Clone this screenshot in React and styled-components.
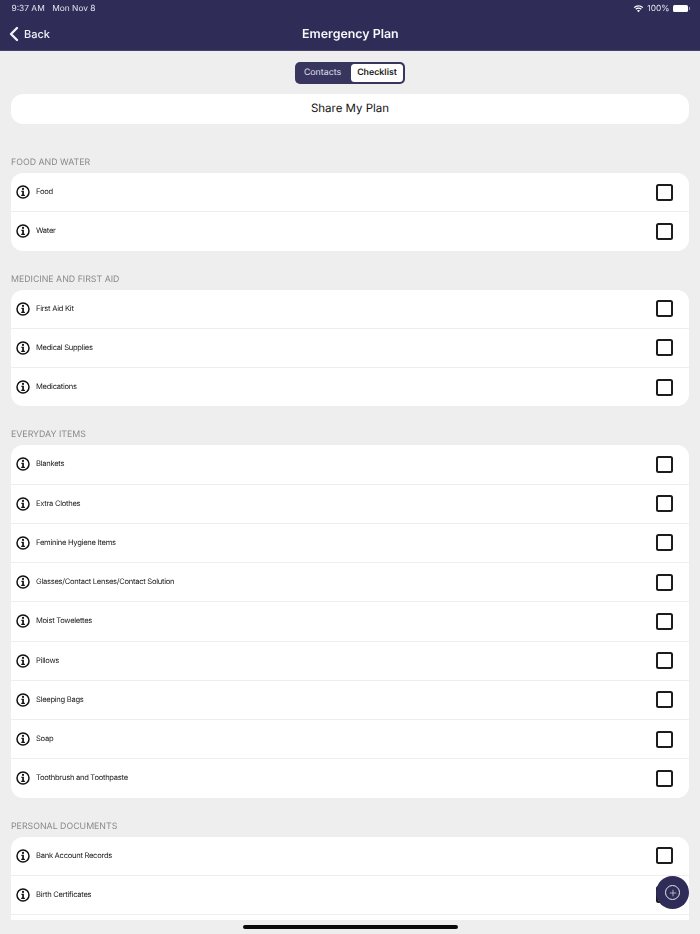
import React from 'react';
import styled, { createGlobalStyle } from 'styled-components';
import { ChevronLeft, Plus } from 'lucide-react';

const sections = [
  { title: 'FOOD AND WATER', items: ['Food', 'Water'] },
  { title: 'MEDICINE AND FIRST AID', items: ['First Aid Kit', 'Medical Supplies', 'Medications'] },
  {
    title: 'EVERYDAY ITEMS',
    items: [
      'Blankets',
      'Extra Clothes',
      'Feminine Hygiene Items',
      'Glasses/Contact Lenses/Contact Solution',
      'Moist Towelettes',
      'Pillows',
      'Sleeping Bags',
      'Soap',
      'Toothbrush and Toothpaste'
    ]
  },
  // the third row here is scrolled out of view, only its top edge shows
  { title: 'PERSONAL DOCUMENTS', items: ['Bank Account Records', 'Birth Certificates', ''] }
];

const InfoIcon = () => (
  <svg width="14" height="14" viewBox="0 0 14 14" fill="none">
    <circle cx="7" cy="7" r="6" stroke="#111" strokeWidth="1.5" />
    <circle cx="7" cy="3.9" r="1.1" fill="#111" />
    <path d="M5.4 5.8H7.9V9.7H8.9V10.9H5.2V9.7H6.2V7H5.4Z" fill="#111" />
  </svg>
);

const WifiIcon = () => (
  <svg width="11" height="8" viewBox="0 0 12 9" fill="#fff">
    <path d="M6 1.6c1.7 0 3.3.7 4.4 1.8l1-1A7.7 7.7 0 0 0 6 .2 7.7 7.7 0 0 0 .6 2.4l1 1A6.3 6.3 0 0 1 6 1.6Z" />
    <path d="M6 4.2c1 0 2 .4 2.6 1.1l1-1A5 5 0 0 0 6 2.8a5 5 0 0 0-3.6 1.5l1 1C4 4.6 5 4.2 6 4.2Z" />
    <path d="M6 5.5c-.7 0-1.3.3-1.8.7L6 8.2l1.8-2c-.5-.4-1.1-.7-1.8-.7Z" />
  </svg>
);

const App = () => {
  return (
    <Page>
      <GlobalStyle />
      <Header>
        <StatusBar>
          <StatusGroup>
            <span>9:37 AM</span>
            <span>Mon Nov 8</span>
          </StatusGroup>
          <StatusRight>
            <WifiIcon />
            <span>100%</span>
            <Battery />
          </StatusRight>
        </StatusBar>
        <NavBar>
          <BackButton>
            <ChevronLeft size={24} strokeWidth={2.4} />
            <span>Back</span>
          </BackButton>
          <NavTitle>Emergency Plan</NavTitle>
        </NavBar>
      </Header>

      <Content>
        <Tabs>
          <Tab>Contacts</Tab>
          <Tab $active>Checklist</Tab>
        </Tabs>
        <ShareButton>Share My Plan</ShareButton>

        {sections.map((section) => (
          <Section key={section.title}>
            <SectionTitle>{section.title}</SectionTitle>
            <Card>
              {section.items.map((item) => (
                <Row key={item}>
                  {item && (
                    <>
                      <InfoIcon />
                      <RowLabel>{item}</RowLabel>
                      <Checkbox />
                    </>
                  )}
                </Row>
              ))}
            </Card>
          </Section>
        ))}
      </Content>

      <HomeArea>
        <HomeIndicator />
      </HomeArea>

      <Fab>
        <FabRing>
          <Plus size={10} strokeWidth={1.6} />
        </FabRing>
      </Fab>
    </Page>
  );
};

const GlobalStyle = createGlobalStyle`
  html, body {
    margin: 0;
    padding: 0;
    background: #eeeeee;
  }
  * {
    box-sizing: border-box;
  }
`;

const Page = styled.div`
  position: relative;
  width: 700px;
  height: 934px;
  display: flex;
  flex-direction: column;
  overflow: hidden;
  background: #eeeeee;
  font-family: Inter, "Liberation Sans", sans-serif;
  text-rendering: geometricPrecision;
  color: #111;
`;

const Header = styled.header`
  flex: none;
  height: 51px;
  background: #2f2c58;
  color: #fff;
  border-bottom: 1px solid #45436d;
`;

const StatusBar = styled.div`
  height: 17px;
  padding: 0 11.5px 0 11.5px;
  display: flex;
  justify-content: space-between;
  align-items: center;
  font-size: 8.4px;
  color: #e6e5ee;
  will-change: transform;
`;

const StatusGroup = styled.div`
  display: flex;
  gap: 7.5px;
`;

const StatusRight = styled.div`
  display: flex;
  align-items: center;
  gap: 3px;
`;

const Battery = styled.div`
  position: relative;
  width: 15px;
  height: 6.5px;
  margin-right: 1px;
  border-radius: 1.5px;
  background: #fff;

  &::after {
    content: '';
    position: absolute;
    right: -2px;
    top: 2px;
    width: 1px;
    height: 2.5px;
    background: #9a99b2;
  }
`;

const NavBar = styled.div`
  position: relative;
  height: 33px;
  display: flex;
  align-items: center;
  justify-content: center;
`;

const BackButton = styled.div`
  position: absolute;
  left: 2px;
  top: 5px;
  display: flex;
  align-items: center;
  font-size: 11px;
  font-weight: 500;
  color: #f2f2f6;
  will-change: transform;

  span {
    margin-left: -2px;
  }
`;

const NavTitle = styled.div`
  font-size: 12.4px;
  font-weight: 600;
  color: #f7f7fa;
  will-change: transform;
`;

const Content = styled.main`
  flex: 1;
  min-height: 0;
  overflow: hidden;
  padding: 11px 11px 0;
  display: flex;
  flex-direction: column;
`;

const Tabs = styled.div`
  align-self: center;
  flex: none;
  width: 110px;
  height: 22px;
  display: flex;
  padding: 2px;
  border-radius: 5px;
  background: #38355f;
`;

const Tab = styled.div`
  flex: ${(p) => (p.$active ? '0 0 52px' : '1')};
  display: flex;
  align-items: center;
  justify-content: center;
  padding: ${(p) => (p.$active ? '0 0 1px' : '0 3px 1px 0')};
  border-radius: 3.5px;
  font-size: 8.8px;
  font-weight: ${(p) => (p.$active ? 600 : 400)};
  color: ${(p) => (p.$active ? '#1a1a1a' : '#e2e1ea')};
  background: ${(p) => (p.$active ? '#fff' : 'transparent')};
`;

const ShareButton = styled.div`
  flex: none;
  height: 30px;
  margin-top: 10px;
  margin-bottom: 32px;
  padding-bottom: 2px;
  display: flex;
  align-items: center;
  justify-content: center;
  background: #fff;
  border-radius: 12px;
  font-size: 11.5px;
  color: #111;
`;

const Section = styled.section`
  flex: none;
  margin-bottom: 22px;
`;

const SectionTitle = styled.div`
  height: 17px;
  font-size: 8.8px;
  line-height: 14px;
  color: #8a8a8a;
  will-change: transform;
`;

const Card = styled.div`
  background: #fff;
  border-radius: 12px;
  overflow: hidden;
`;

const Row = styled.div`
  height: 38.25px;
  padding: 0 16px 0 5px;
  display: flex;
  align-items: center;

  & + & {
    height: 39.25px;
    border-top: 1px solid #eeeeee;
  }
`;

const RowLabel = styled.div`
  flex: 1;
  margin-left: 6px;
  padding-bottom: 1px;
  font-size: 7.6px;
  letter-spacing: -0.28px;
  color: #222;
  will-change: transform;
`;

const Checkbox = styled.div`
  width: 17px;
  height: 17px;
  border: 2.4px solid #1c1c1c;
  border-radius: 2.5px;
`;

const HomeArea = styled.div`
  flex: none;
  height: 14px;
  display: flex;
  justify-content: center;
  padding-top: 5px;
`;

const HomeIndicator = styled.div`
  width: 215px;
  height: 4px;
  border-radius: 2px;
  background: #0a0a0a;
`;

const Fab = styled.div`
  position: absolute;
  left: 656px;
  top: 876px;
  width: 33px;
  height: 33px;
  border-radius: 50%;
  background: #2f2c58;
  display: flex;
  align-items: center;
  justify-content: center;
`;

const FabRing = styled.div`
  width: 15px;
  height: 15px;
  border: 1px solid #e8e8f0;
  border-radius: 50%;
  display: flex;
  align-items: center;
  justify-content: center;
  color: #e8e8f0;
`;

export default App;
